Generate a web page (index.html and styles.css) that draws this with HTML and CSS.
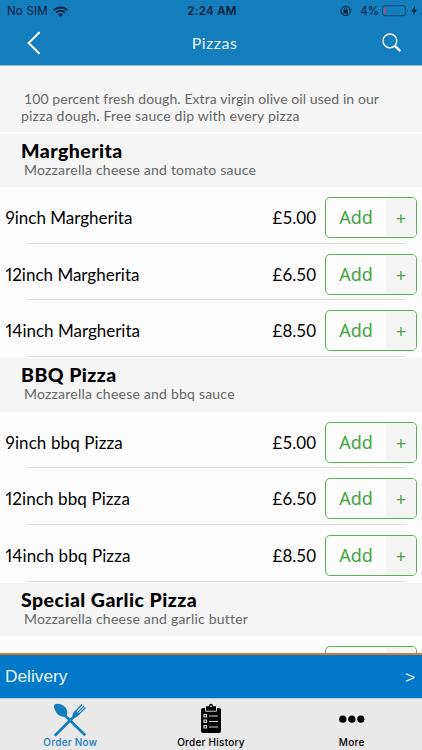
FILE: index.html
```html
<!DOCTYPE html>
<html lang="en">
<head>
    <meta charset="utf-8">
    <title>Pizzas</title>
    <link rel="stylesheet" href="styles.css">
</head>
<body>
    <header>
        <div class="status-bar">
            <div class="carrier">
                <span class="sim">No SIM</span>
                <svg width="15" height="11" viewBox="0 0 15 11" fill="none" stroke="#06213a" stroke-width="2">
                    <path d="M.8 4.1a9.6 9.6 0 0 1 13.4 0"/>
                    <path d="M3.2 6.6a6.1 6.1 0 0 1 8.6 0"/>
                    <path d="M7.5 10.8 5.2 8.4a3.3 3.3 0 0 1 4.6 0z" fill="#06213a" stroke="none"/>
                </svg>
            </div>
            <div class="time">2:24 AM</div>
            <div class="battery">
                <svg class="lock" width="12" height="12" viewBox="0 0 12 12" fill="none" stroke="#06213a">
                    <path d="M10.2 7.5a4.7 4.7 0 1 1 .1-2.8"/>
                    <path d="M8.8 4.6h3L10.4 6.8z" fill="#06213a" stroke="none"/>
                    <path d="M4.4 5.4V4.2a1.3 1.3 0 0 1 2.6 0v1.2"/>
                    <path d="M3.5 5.2h4.4v3.3H3.5z" fill="#06213a" stroke="none"/>
                </svg>
                <span class="percent">4%</span>
                <svg width="36" height="12" viewBox="0 0 36 12">
                    <rect x=".5" y=".7" width="23" height="10" rx="2.5" fill="none" stroke="#0d456f"/>
                    <path d="M2 2.5h1.2v6.5H2z" fill="#d0434c"/>
                    <path d="M25 4.2q1.6 1.5 0 3z" fill="#0d456f"/>
                    <path d="M33.2.8 29.2 6.4h2.5L30.7 10.6l4.3-5.8h-2.6z" fill="#06213a"/>
                </svg>
            </div>
        </div>
        <div class="nav-bar">
            <svg width="14" height="24" viewBox="0 0 14 24" fill="none" stroke="#fff" stroke-width="2">
                <path d="M12.5 1.2 1.6 12l10.9 10.8"/>
            </svg>
            <h1>Pizzas</h1>
            <svg width="20" height="20" viewBox="0 0 20 20" fill="none" stroke="#fff">
                <circle cx="7.9" cy="7.9" r="6.9" stroke-width="1.3"/>
                <path d="m12.8 12.8 5.5 5.3" stroke-width="2.3"/>
            </svg>
        </div>
    </header>

    <main>
        <p class="intro"><span class="line-1">100 percent fresh dough. Extra virgin olive oil used in our</span><br><span class="line-2">pizza dough. Free sauce dip with every pizza</span></p>

        <section>
            <div class="group">
                <h2>Margherita</h2>
                <p>Mozzarella cheese and tomato sauce</p>
            </div>
            <div class="item"><span class="name">9inch Margherita</span><span class="price">£5.00</span><button><span>Add</span><i>+</i></button></div>
            <div class="item"><span class="name">12inch Margherita</span><span class="price">£6.50</span><button><span>Add</span><i>+</i></button></div>
            <div class="item"><span class="name">14inch Margherita</span><span class="price">£8.50</span><button><span>Add</span><i>+</i></button></div>
        </section>

        <section>
            <div class="group">
                <h2>BBQ Pizza</h2>
                <p>Mozzarella cheese and bbq sauce</p>
            </div>
            <div class="item"><span class="name wide">9inch bbq Pizza</span><span class="price">£5.00</span><button><span>Add</span><i>+</i></button></div>
            <div class="item"><span class="name wide">12inch bbq Pizza</span><span class="price">£6.50</span><button><span>Add</span><i>+</i></button></div>
            <div class="item"><span class="name wide">14inch bbq Pizza</span><span class="price">£8.50</span><button><span>Add</span><i>+</i></button></div>
        </section>

        <section>
            <div class="group">
                <h2>Special Garlic Pizza</h2>
                <p>Mozzarella cheese and garlic butter</p>
            </div>
            <div class="item"><span class="name"></span><span class="price"></span><button><span></span><i></i></button></div>
        </section>
    </main>

    <div class="delivery">
        <span>Delivery</span>
        <span class="arrow">&gt;</span>
    </div>

    <nav>
        <div class="tab active">
            <svg width="34" height="34" viewBox="0 0 34 34" fill="#147dbd" stroke="#147dbd">
                <path d="M11.5 12 31.5 31.5" stroke-width="2.6" stroke-linecap="round"/>
                <path d="M2.5 32 22 12.5" stroke-width="2.6" stroke-linecap="round"/>
                <path d="M1.6 1.6C4.5-.2 10 1.5 12.6 4.7c2.3 2.9 2.2 6.7.3 8.2-2 1.5-5.8.8-8.2-1.7C2 8.4.2 3.5 1.6 1.6z" stroke="none"/>
                <path d="M20 14.5c-1.3-3 .2-5.2 2.5-7.3l2 2 2 2c-2 2.3-4 4-6.500 3.300z" stroke="none"/>
                <path d="m22.500 8.500 6.500-7M24.500 9.700l6.700-6.800M25.800 11.300l6.700-6.800M21.500 10l2 2 3-2" stroke-width="1.2" fill="none"/>
            </svg>
            <span>Order Now</span>
        </div>
        <div class="tab">
            <svg width="34" height="34" viewBox="0 0 34 34">
                <path d="M9 5h3V3.200h3Q15.200.8 17 .8T19 3.200h3V5h3q2 0 2 2v21q0 2-2 2H9q-2 0-2-2V7q0-2 2-2z"/>
                <path d="M11.500 5v3.200h11V5" fill="none" stroke="#e9e9e9" stroke-width=".9"/>
                <g fill="none" stroke="#d8d8d8" stroke-width="1.2">
                    <path d="M10 11.500h2.500v2.500H10zM10 17h2.500v2.500H10zM10 22.500h2.500v2.500H10z"/>
                    <path d="M15 13h9M15 18.500h9M15 24h9"/>
                </g>
                <circle cx="17" cy="3.300" r=".9" fill="#e9e9e9"/>
            </svg>
            <span>Order History</span>
        </div>
        <div class="tab">
            <svg width="34" height="34" viewBox="0 0 34 34">
                <circle cx="7.800" cy="16.200" r="3.600"/>
                <circle cx="16.800" cy="16.200" r="3.600"/>
                <circle cx="25.800" cy="16.200" r="3.600"/>
            </svg>
            <span>More</span>
        </div>
    </nav>
</body>
</html>
```
FILE: styles.css
```css
* {
    box-sizing: border-box;
}
body {
    display: flex;
    flex-direction: column;
    height: 750px;
    margin: 0;
    overflow: hidden;
    background-color: #fdfdfd;
    font-family: Lato, "Liberation Sans", sans-serif;
}
h1, h2, p {
    margin: 0;
    font-weight: normal;
}
header {
    flex: none;
    height: 66px;
    background-color: #147dbd;
    border-bottom: 1px solid #8fbfdd;
}
.status-bar {
    display: grid;
    grid-template-columns: 1fr auto 1fr;
    align-items: center;
    height: 22px;
    padding: 0 5px 0 7px;
    color: #06213a;
    font: 11.5px Inter, sans-serif;
}
.carrier, .battery {
    display: flex;
    align-items: center;
}
.sim {
    margin-right: 5px;
    letter-spacing: 0.2px;
}
.time {
    font-weight: 600;
    letter-spacing: 0.3px;
}
.battery {
    justify-content: flex-end;
}
.lock {
    margin-left: 2px;
}
.percent {
    margin: 0 3px 0 8px;
}
.battery svg:last-child {
    margin-right: -1px;
}
.nav-bar {
    display: flex;
    align-items: center;
    justify-content: space-between;
    height: 42px;
    padding: 0 20px 0 27px;
    color: #e6f4ff;
}
h1 {
    padding: 0 0 2px 6px;
    font-size: 16px;
    letter-spacing: 0.5px;
}
main {
    flex: 1;
    min-height: 0;
    overflow: hidden;
}
.intro {
    height: 66px;
    padding: 25px 0 0 21px;
    background-color: #f5f5f5;
    color: #666;
    font-size: 14px;
    line-height: 16.5px;
    white-space: nowrap;
}
.line-1 {
    margin-left: 3px;
    letter-spacing: 0.08px;
}
.line-2 {
    letter-spacing: 0.2px;
}
section {
    padding-bottom: 1px;
}
.group {
    height: 53.6px;
    padding: 6px 0 0 21px;
    background-color: #f5f5f5;
}
.intro + section .group {
    height: 55px;
    border-top: 2px solid #fafafa;
}
h2 {
    font-size: 19.5px;
    font-weight: 900;
    line-height: 22px;
    letter-spacing: 0.45px;
}
.group p {
    padding-left: 3px;
    color: #666;
    font-size: 14px;
    line-height: 15px;
    letter-spacing: 0.22px;
}
.item {
    display: flex;
    align-items: center;
    position: relative;
    height: 56.7px;
    padding: 4px 5px 0 5.5px;
    font-size: 17px;
}
.item::after {
    content: "";
    position: absolute;
    left: 26px;
    right: 16px;
    bottom: 0;
    height: 1px;
    background-color: #ddd;
}
.name {
    flex: 1;
    font-variant-numeric: proportional-nums;
}
.wide {
    letter-spacing: 0.1px;
}
.price {
    margin-right: 9px;
}
button {
    display: flex;
    width: 92px;
    height: 41px;
    padding: 0;
    overflow: hidden;
    background-color: #fdfdfd;
    border: 1px solid #5cac58;
    border-radius: 5px;
    color: #46a443;
    font: 18px/39px "Noto Sans", sans-serif;
}
button span {
    flex: 1;
}
button i {
    width: 30px;
    height: 100%;
    background-color: #f4f4f4;
    font-style: normal;
    line-height: 41px;
}
.delivery {
    display: flex;
    flex: none;
    justify-content: space-between;
    align-items: center;
    height: 45px;
    padding: 0 7px 0 5px;
    background-color: #0279c8;
    border-top: 2px solid #d47b35;
    color: #e6f4ff;
    font: 17.3px "Liberation Sans", sans-serif;
}
.arrow {
    padding-top: 2px;
}
nav {
    display: grid;
    grid-template-columns: repeat(3, 1fr);
    flex: none;
    height: 52px;
    background-color: #e9e9e9;
    border-top: 1px solid #b5d3e8;
}
.tab {
    display: flex;
    flex-direction: column;
    align-items: center;
    padding-top: 4px;
    font: 500 10px/11px Inter, sans-serif;
    letter-spacing: 0.25px;
}
.active {
    color: #147dbd;
}
```
